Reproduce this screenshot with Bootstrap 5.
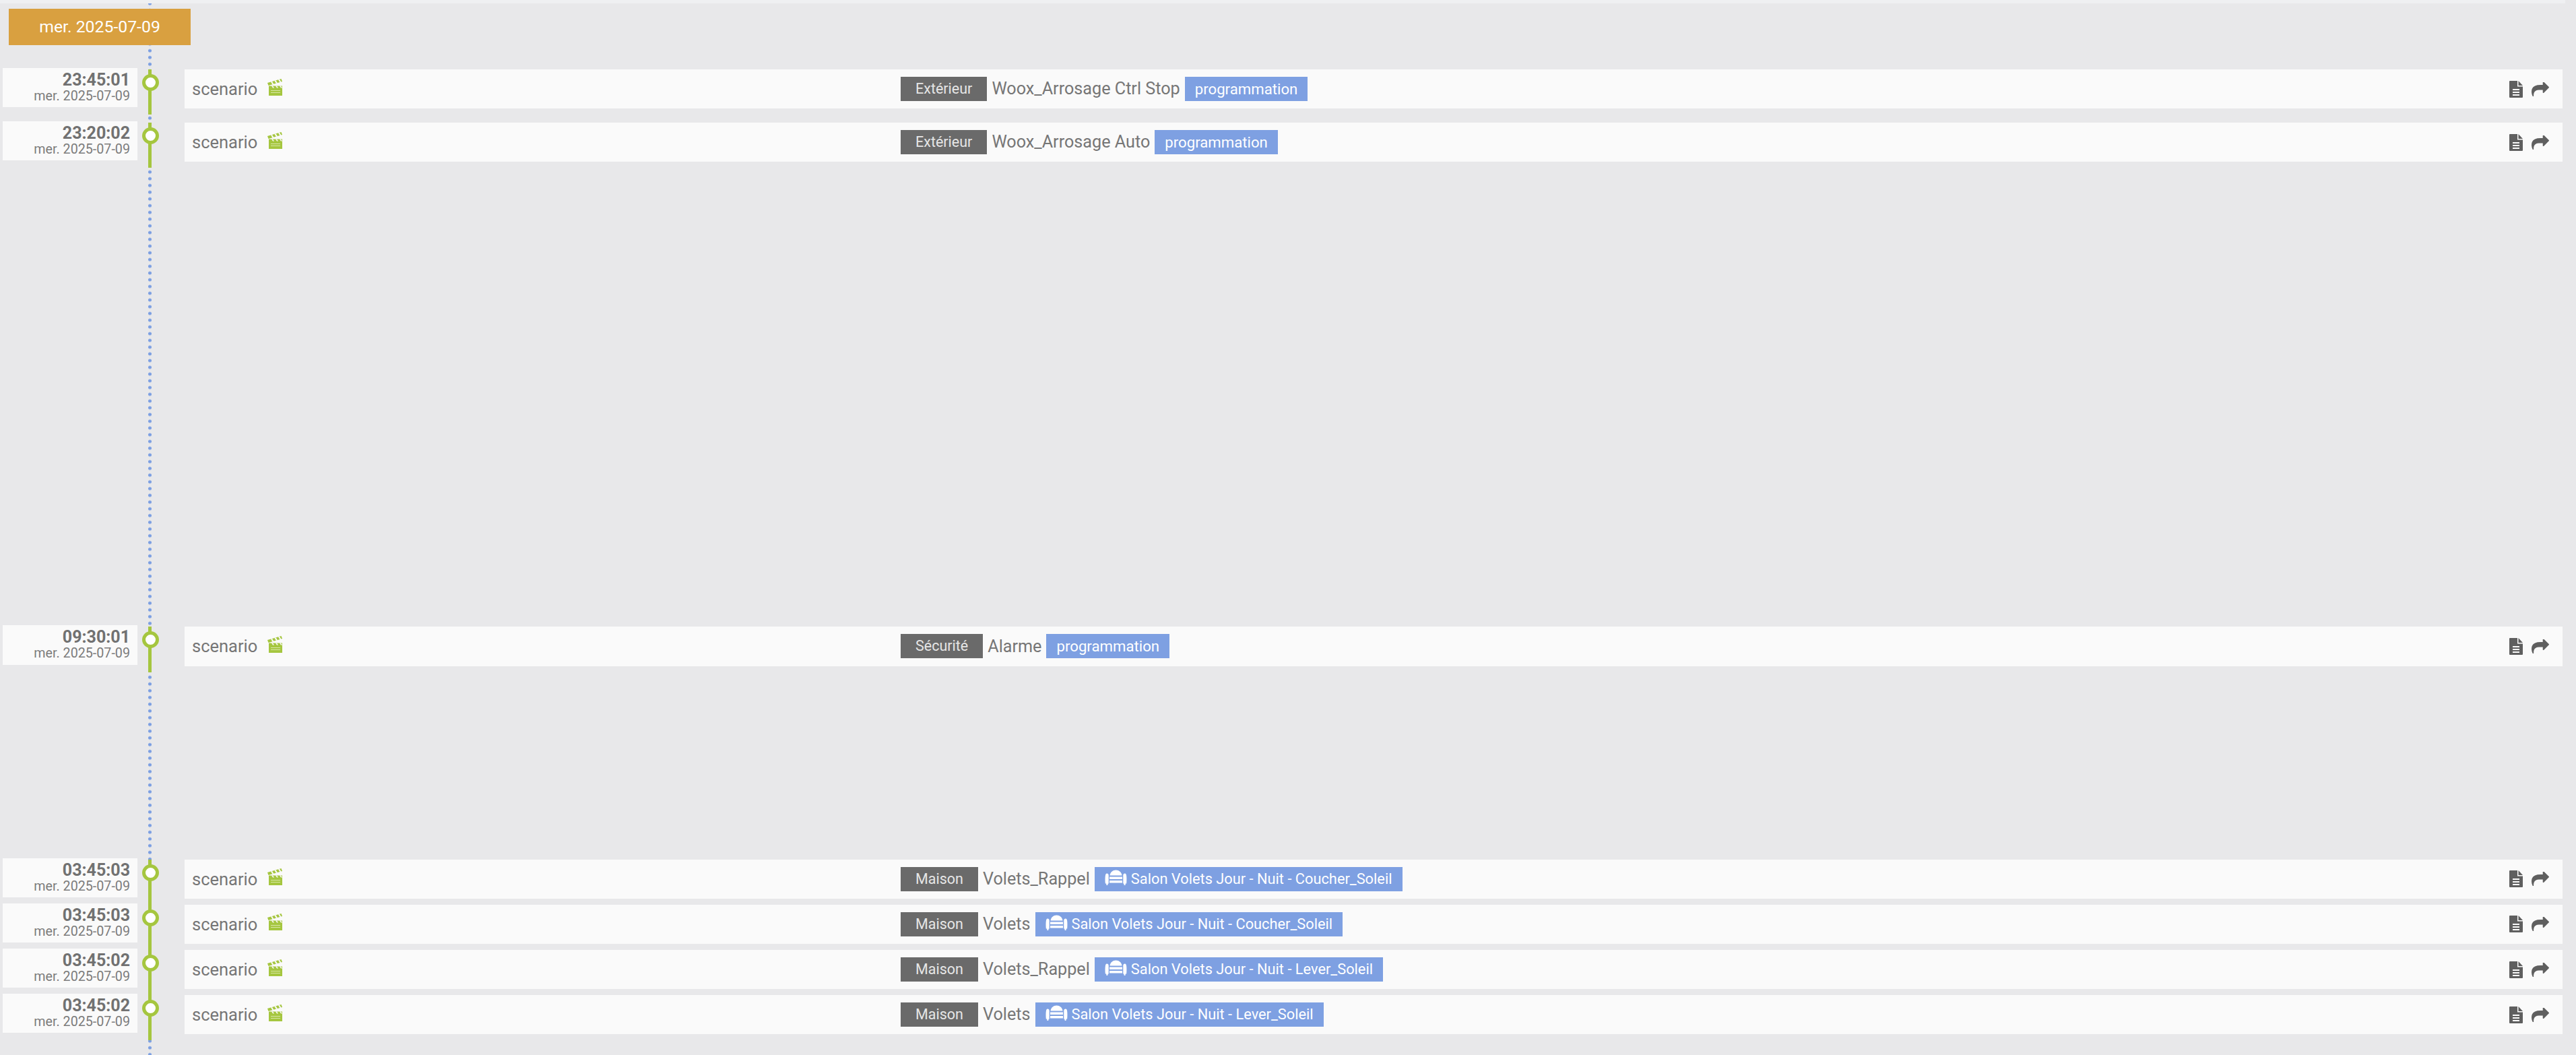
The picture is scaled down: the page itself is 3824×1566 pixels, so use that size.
<!DOCTYPE html>
<html lang="fr">
  <head>
    <meta charset="UTF-8" />
    <title>Timeline</title>
    <link
      href="https://cdn.jsdelivr.net/npm/bootstrap@5.3.2/dist/css/bootstrap.min.css"
      rel="stylesheet"
    />
    <style>
      body {
        background-color: #e8e8ea;
        color: #767676;
        font-family: Roboto, "Liberation Sans", sans-serif;
      }
      .top-strip {
        height: 5px;
        margin-right: 16px;
        background-color: #eff0f2;
      }
      .tl-page {
        position: relative;
        min-height: 1561px;
        padding: 8px 20px 0 4px;
      }
      /* dotted axis behind everything */
      .tl-page::before {
        content: "";
        position: absolute;
        top: 0;
        bottom: 0;
        left: 220px;
        width: 5px;
        background-image: radial-gradient(circle at center, #7c9fe2 2.3px, transparent 2.7px);
        background-size: 5px 10.006px;
        background-position: 0 -4.7px;
      }
      .tl-day {
        position: relative;
        width: 270px;
        height: 54px;
        margin-left: 9px;
        margin-bottom: 36px;
        background-color: #d9a040;
        color: #fff;
        font-size: 24.800px;
        line-height: 54px;
        text-align: center;
      }
      .tl-row {
        position: relative;
        height: 67.2px;
      }
      .tl-gap-a { margin-top: 12px; }
      .tl-gap-b { margin-top: 681px; }
      .tl-gap-c { margin-top: 278px; }
      .tl-when {
        width: 200px;
        height: 58.2px;
        margin-top: -2px;
        padding: 6px 11px 0 0;
        background-color: #fafafa;
        text-align: right;
      }
      .tl-time {
        font-size: 25px;
        font-weight: 700;
        line-height: 24px;
        color: #717171;
      }
      .tl-date {
        font-size: 19.700px;
        line-height: 24px;
        color: #7c7c7c;
      }
      .tl-node {
        position: relative;
        width: 70px;
      }
      .tl-stem {
        width: 5px;
        height: 67.2px;
        margin-left: 16px;
        background-color: #a5c63f;
      }
      .tl-dot {
        position: absolute;
        top: 7px;
        left: 7px;
        width: 25px;
        height: 25px;
        border: 5px solid #a5c63f;
        border-radius: 50%;
        background-color: #fff;
      }
      .tl-body {
        height: 58.2px;
        padding-left: 11px;
        background-color: #fafafa;
        font-size: 25.200px;
      }
      .tl-type {
        width: 1052px;
        font-size: 25.500px;
      }
      .tl-type svg {
        width: 22px;
        height: 25px;
        margin-left: 15px;
        margin-top: -6px;
      }
      .tl-info {
        gap: 7px;
      }
      .tl-obj {
        padding: 0 22px;
        line-height: 36px;
        background-color: #6a6a6a;
        color: #e6e6e6;
        font-size: 21.500px;
      }
      .tl-trig {
        padding: 0 15px;
        line-height: 36px;
        background-color: #7ea0e2;
        color: #fff;
        font-size: 22.200px;
      }
      .tl-room {
        font-size: 21.800px;
      }
      .tl-trig svg {
        width: 33px;
        height: 23px;
        margin-right: 6px;
        vertical-align: -2px;
      }
      .tl-actions {
        gap: 13px;
        margin-right: 20px;
        color: #5f5f5f;
      }
      .ico-file {
        width: 20px;
        height: 25px;
      }
      .ico-share {
        width: 26px;
        height: 21px;
      }
    </style>
  </head>
  <body>
    <svg class="d-none">
      <symbol id="i-clap" viewBox="0 0 22 25">
        <path fill="#a5c63f" d="M2 10.500h20V25H2z" />
        <path fill="#a5c63f" d="M0 6 20.500 0 22 4 1.500 10z" />
        <path fill="#fafafa" d="M5 4.500 7.500 8.500l2-.6L7 3.900zM10.500 2.900 13 6.900l2-.6-2.500-4zM16 1.300 18.500 5.300l2-.6L18 .7zM6 10.500 8 13.500h2l-2-3zM12 10.500 14 13.500h2l-2-3zM18 10.500 20 13.500h2l-2-3z" />
        <path fill="#d8e6a8" d="M5 17h14v1H5zM5 20h14v1H5z" />
      </symbol>
      <symbol id="i-sofa" viewBox="0 0 33 23">
        <path fill="#fff" d="M7.500 8.500C8 3.500 12 .5 16.500 .5S25 3.500 25.500 8.500z" />
        <path fill="#fff" d="M7 10.500h19v3.500H7zM7 16h19v3.500H7z" />
        <path fill="#fff" d="M3 5.500c1.800 0 2.700 1.200 2.700 3V20.500H4.800L4.200 23H2.500l-.3-2.500H.8C.4 16 .4 11 1 8c.3-1.500 1-2.500 2-2.500zM30 5.500c-1.800 0-2.700 1.200-2.700 3V20.500h.9l.6 2.500h1.700l.3-2.500h1.400c.4-4.500.4-9.500-.2-12.500-.3-1.500-1-2.500-2-2.500z" />
      </symbol>
      <symbol id="i-file" viewBox="0 0 20 25">
        <path fill="currentColor" fill-rule="evenodd" d="M1 0h11v8.500h8V24a1 1 0 0 1-1 1H1a1 1 0 0 1-1-1V1a1 1 0 0 1 1-1zM5 12v2h10v-2zM5 16v2h10v-2zM5 20v2h10v-2z" />
        <path fill="currentColor" d="M13.500 0 20 7h-6.500z" />
      </symbol>
      <symbol id="i-share" viewBox="0 128 1792 1408">
        <path fill="currentColor" d="M1792 640q0 26-19 45l-512 512q-19 19-45 19t-45-19-19-45v-256h-224q-98 0-175.500 6t-154 21.500-133 42.500-105.500 69.500-80 101-48.500 138.500-17.500 181q0 55 5 123 0 6 2.500 23.500t2.500 26.500q0 15-8.500 25t-23.500 10q-16 0-28-17-7-9-13-22t-13.500-30-10.500-24q-127-285-127-451 0-199 53-333 162-403 875-403h224v-256q0-26 19-45t45-19 45 19l512 512q19 19 19 45z" />
      </symbol>
    </svg>

    <div class="top-strip"></div>
    <div class="tl-page">
      <div class="tl-day">mer. 2025-07-09</div>

      <div class="tl-row d-flex align-items-start">
        <div class="tl-when"><div class="tl-time">23:45:01</div><div class="tl-date">mer. 2025-07-09</div></div>
        <div class="tl-node"><div class="tl-stem"></div><div class="tl-dot"></div></div>
        <div class="tl-body flex-grow-1 d-flex align-items-center">
          <div class="tl-type d-flex align-items-center">scenario<svg><use href="#i-clap" /></svg></div>
          <div class="tl-info d-flex align-items-center"><span class="tl-obj">Extérieur</span><span>Woox_Arrosage Ctrl Stop</span><span class="tl-trig">programmation</span></div>
          <div class="tl-actions ms-auto d-flex align-items-center"><svg class="ico-file"><use href="#i-file" /></svg><svg class="ico-share"><use href="#i-share" /></svg></div>
        </div>
      </div>

      <div class="tl-row tl-gap-a d-flex align-items-start">
        <div class="tl-when"><div class="tl-time">23:20:02</div><div class="tl-date">mer. 2025-07-09</div></div>
        <div class="tl-node"><div class="tl-stem"></div><div class="tl-dot"></div></div>
        <div class="tl-body flex-grow-1 d-flex align-items-center">
          <div class="tl-type d-flex align-items-center">scenario<svg><use href="#i-clap" /></svg></div>
          <div class="tl-info d-flex align-items-center"><span class="tl-obj">Extérieur</span><span>Woox_Arrosage Auto</span><span class="tl-trig">programmation</span></div>
          <div class="tl-actions ms-auto d-flex align-items-center"><svg class="ico-file"><use href="#i-file" /></svg><svg class="ico-share"><use href="#i-share" /></svg></div>
        </div>
      </div>

      <div class="tl-row tl-gap-b d-flex align-items-start">
        <div class="tl-when"><div class="tl-time">09:30:01</div><div class="tl-date">mer. 2025-07-09</div></div>
        <div class="tl-node"><div class="tl-stem"></div><div class="tl-dot"></div></div>
        <div class="tl-body flex-grow-1 d-flex align-items-center">
          <div class="tl-type d-flex align-items-center">scenario<svg><use href="#i-clap" /></svg></div>
          <div class="tl-info d-flex align-items-center"><span class="tl-obj">Sécurité</span><span>Alarme</span><span class="tl-trig">programmation</span></div>
          <div class="tl-actions ms-auto d-flex align-items-center"><svg class="ico-file"><use href="#i-file" /></svg><svg class="ico-share"><use href="#i-share" /></svg></div>
        </div>
      </div>

      <div class="tl-row tl-gap-c d-flex align-items-start">
        <div class="tl-when"><div class="tl-time">03:45:03</div><div class="tl-date">mer. 2025-07-09</div></div>
        <div class="tl-node"><div class="tl-stem"></div><div class="tl-dot"></div></div>
        <div class="tl-body flex-grow-1 d-flex align-items-center">
          <div class="tl-type d-flex align-items-center">scenario<svg><use href="#i-clap" /></svg></div>
          <div class="tl-info d-flex align-items-center"><span class="tl-obj">Maison</span><span>Volets_Rappel</span><span class="tl-trig tl-room"><svg><use href="#i-sofa" /></svg>Salon Volets Jour - Nuit - Coucher_Soleil</span></div>
          <div class="tl-actions ms-auto d-flex align-items-center"><svg class="ico-file"><use href="#i-file" /></svg><svg class="ico-share"><use href="#i-share" /></svg></div>
        </div>
      </div>

      <div class="tl-row d-flex align-items-start">
        <div class="tl-when"><div class="tl-time">03:45:03</div><div class="tl-date">mer. 2025-07-09</div></div>
        <div class="tl-node"><div class="tl-stem"></div><div class="tl-dot"></div></div>
        <div class="tl-body flex-grow-1 d-flex align-items-center">
          <div class="tl-type d-flex align-items-center">scenario<svg><use href="#i-clap" /></svg></div>
          <div class="tl-info d-flex align-items-center"><span class="tl-obj">Maison</span><span>Volets</span><span class="tl-trig tl-room"><svg><use href="#i-sofa" /></svg>Salon Volets Jour - Nuit - Coucher_Soleil</span></div>
          <div class="tl-actions ms-auto d-flex align-items-center"><svg class="ico-file"><use href="#i-file" /></svg><svg class="ico-share"><use href="#i-share" /></svg></div>
        </div>
      </div>

      <div class="tl-row d-flex align-items-start">
        <div class="tl-when"><div class="tl-time">03:45:02</div><div class="tl-date">mer. 2025-07-09</div></div>
        <div class="tl-node"><div class="tl-stem"></div><div class="tl-dot"></div></div>
        <div class="tl-body flex-grow-1 d-flex align-items-center">
          <div class="tl-type d-flex align-items-center">scenario<svg><use href="#i-clap" /></svg></div>
          <div class="tl-info d-flex align-items-center"><span class="tl-obj">Maison</span><span>Volets_Rappel</span><span class="tl-trig tl-room"><svg><use href="#i-sofa" /></svg>Salon Volets Jour - Nuit - Lever_Soleil</span></div>
          <div class="tl-actions ms-auto d-flex align-items-center"><svg class="ico-file"><use href="#i-file" /></svg><svg class="ico-share"><use href="#i-share" /></svg></div>
        </div>
      </div>

      <div class="tl-row d-flex align-items-start">
        <div class="tl-when"><div class="tl-time">03:45:02</div><div class="tl-date">mer. 2025-07-09</div></div>
        <div class="tl-node"><div class="tl-stem"></div><div class="tl-dot"></div></div>
        <div class="tl-body flex-grow-1 d-flex align-items-center">
          <div class="tl-type d-flex align-items-center">scenario<svg><use href="#i-clap" /></svg></div>
          <div class="tl-info d-flex align-items-center"><span class="tl-obj">Maison</span><span>Volets</span><span class="tl-trig tl-room"><svg><use href="#i-sofa" /></svg>Salon Volets Jour - Nuit - Lever_Soleil</span></div>
          <div class="tl-actions ms-auto d-flex align-items-center"><svg class="ico-file"><use href="#i-file" /></svg><svg class="ico-share"><use href="#i-share" /></svg></div>
        </div>
      </div>
    </div>

    <script src="https://cdn.jsdelivr.net/npm/bootstrap@5.3.2/dist/js/bootstrap.bundle.min.js"></script>
  </body>
</html>
